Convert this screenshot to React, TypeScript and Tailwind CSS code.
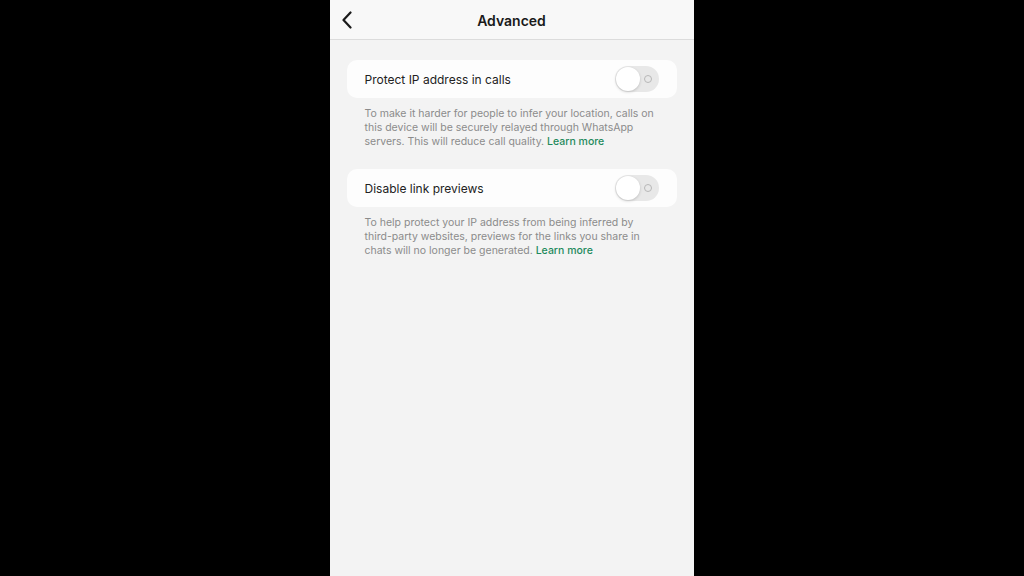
import React from "react";

function Toggle() {
  return (
    <div className="relative h-[26px] w-[44px] shrink-0 rounded-full bg-[#e8e8e8]">
      <div className="absolute left-[1px] top-[1px] h-[24px] w-[24px] rounded-full bg-white shadow-[0_1px_3px_rgba(0,0,0,0.18)]" />
      <div className="absolute right-[7px] top-[9px] h-[8px] w-[8px] rounded-full border border-[#b8b8b8]" />
    </div>
  );
}

function Setting({ title, children }: { title: string; children: React.ReactNode }) {
  return (
    <div>
      <div className="mx-[17px] flex h-[38px] items-center justify-between rounded-[10px] bg-[#fdfdfd] pl-[18px] pr-[18px]">
        <span className="pt-[2px] text-[12px] text-[#222]">{title}</span>
        <Toggle />
      </div>
      <p className="mt-[9px] px-[35px] text-[10.5px] leading-[14px] text-[#8b8b8b]">{children}</p>
    </div>
  );
}

export default function App() {
  return (
    <div
      className="flex h-[576px] w-[1024px] justify-center bg-black"
      style={{ fontFamily: "Inter, 'Noto Sans', sans-serif" }}
    >
      <div className="ml-[-1px] flex w-[364px] flex-col bg-[#f3f3f3]">
        <header className="relative flex h-[40px] items-center justify-center border-b border-[#dcdcdc] bg-[#f8f8f8] pt-[2px]">
          <svg
            className="absolute left-[11px] top-[11px]"
            width="12"
            height="18"
            viewBox="0 0 12 18"
            fill="none"
            stroke="#1a1a1a"
            strokeWidth="2.2"
            strokeLinecap="round"
            strokeLinejoin="round"
          >
            <path d="M9.5 1.5 2.5 9l7 7.5" />
          </svg>
          <h1 className="text-[14px] font-semibold text-[#1a1a1a]">Advanced</h1>
        </header>
        <div className="flex flex-col gap-[20px] pt-[20px]">
          <Setting title="Protect IP address in calls">
            To make it harder for people to infer your location, calls on this device will be securely relayed
            through WhatsApp servers. This will reduce call quality. <span className="font-medium text-[#1f8a5c]">Learn more</span>
          </Setting>
          <Setting title="Disable link previews">
            To help protect your IP address from being inferred by third-party websites, previews for the links you
            share in chats will no longer be generated. <span className="font-medium text-[#1f8a5c]">Learn more</span>
          </Setting>
        </div>
      </div>
    </div>
  );
}
